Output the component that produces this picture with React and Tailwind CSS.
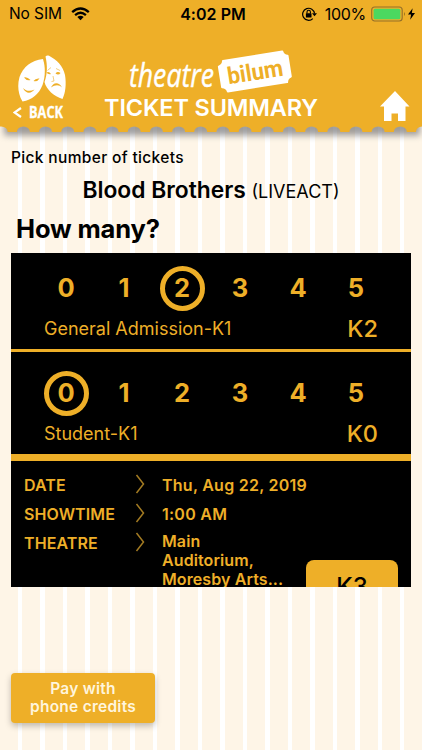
import React, { useState } from "react";
import clsx from "clsx";

const counts = [0, 1, 2, 3, 4, 5];

const notches = Array.from({ length: 20 }, (_, i) => 1.2 + i * 22.17);

// bottom edge of the header, cut like a ticket
function TicketEdge() {
  let d = "M-12 0 V6";
  notches.forEach((x) => {
    d += ` L${(x - 6.5).toFixed(1)} 6 A6.5 5.5 0 0 1 ${(x + 6.5).toFixed(1)} 6`;
  });
  d += " L440 6 V0 Z";

  return (
    <svg width="422" height="24" viewBox="0 0 422 24" className="-mb-[18px] block">
      <rect x="4" y="-6" width="416" height="15.500" fill="#66666a" opacity="0.62" className="blur-[3px]" />
      <path d={d} fill="#eeaf28" />
    </svg>
  );
}

function Masks() {
  return (
    <svg width="50" height="48" viewBox="0 0 50 48" className="block">
      <path d="M27.500 1.500C28.500 .5 29.500 0 31 .8C39 5 45 11 47 20C48.500 29 47.500 38 44.500 44C36 41 28.500 35 26.500 27C29.500 19 29.500 10 27.500 1.500Z" fill="#fff" />
      <path d="M25 4C13 5.500 5 12 1.500 22C-.8 30 0 39 4.500 46.500C14 45 21 39 24.500 30C27.500 21 27.500 12 25 4Z" fill="#fff" />
      <g fill="#eeaf28">
        <path d="M6 22.500Q9 21.500 12.500 25Q8.500 26 6 22.500Z" />
        <path d="M15.500 26Q17.500 23 21.500 23.500Q19.500 27 15.500 26Z" />
        <path d="M5 33C8.500 36.500 12.500 36.500 16.500 34.500C13.500 38.500 8 39.500 5 33Z" />
        <path d="M28.500 17.500Q31 16 33 19Q30 19.800 28.500 17.500Z" />
        <path d="M37.500 18.500Q39.500 16 42.500 18Q40.500 20.800 37.500 18.500Z" />
        <path d="M33 32.500C34.500 28 40.500 25.500 44 32.500C41 29.500 37.500 29.500 33 32.500Z" />
      </g>
      <path d="M29.500 15.500L33 12.500M38 13.500L42 15.500M35 21L36 26L33.500 26.500" fill="none" stroke="#eeaf28" strokeWidth="0.6" />
    </svg>
  );
}

function StatusBar() {
  return (
    <div className="grid h-7 grid-cols-[1fr_auto_1fr] items-center pl-[9px] pr-[7px] text-black">
      <div className="flex items-center gap-[9px]">
        <span className="text-[15.500px] tracking-[-0.1px]">No SIM</span>
        <svg width="19" height="14" viewBox="0 0 19 14">
          <path d="M1.200 5.200Q9.500 -2.300 17.800 5.200M4.100 8.100Q9.500 3.500 14.900 8.100" fill="none" stroke="#000" strokeWidth="2.300" />
          <path d="M6.300 10Q9.500 7.500 12.700 10L9.500 13.200Z" />
        </svg>
      </div>
      <span className="text-[16px] font-semibold tracking-[0.05px] translate-x-[1px]">4:02 PM</span>
      <div className="flex items-center justify-end">
        <svg width="15" height="14" viewBox="0 0 15 14" className="mr-[8px]">
          <path d="M10.800 11.600A6 6 0 1 1 12.600 6.500" fill="none" stroke="#000" strokeWidth="1.200" />
          <path d="M10 6.300H15L12.500 9.300Z" />
          <rect x="3.900" y="6.200" width="5.600" height="4.200" rx="0.500" />
          <path d="M5 6.500V5A1.700 1.700 0 0 1 8.400 5V6.500" fill="none" stroke="#000" strokeWidth="1.100" />
        </svg>
        <span className="mr-[5px] text-[16px] tracking-[-0.3px]">100%</span>
        <svg width="35" height="16" viewBox="0 0 35 16" className="mr-[2px]">
          <rect x="0.700" y="1" width="30.500" height="14" rx="3" fill="none" stroke="#947029" strokeWidth="1.100" />
          <rect x="2.600" y="2.800" width="26.700" height="10.400" rx="1.500" fill="#4bd860" />
          <path d="M33 5.800Q34.500 8 33 10.200Z" fill="#775718" />
        </svg>
        <svg width="7" height="12" viewBox="0 0 8 13">
          <path d="M5.300 0L0 7.200H3.500L2.500 13L8 5.300H4.400Z" />
        </svg>
      </div>
    </div>
  );
}

function Logo() {
  return (
    <svg width="168" height="46" viewBox="0 0 168 46" className="block overflow-visible">
      <text x="2" y="39" textLength="85" lengthAdjust="spacingAndGlyphs" fill="#fff" stroke="#fff" strokeWidth="0.4" className="font-['Open_Sans',sans-serif] text-[33px] italic">
        theatre
      </text>
      <g transform="rotate(-9 128 23)">
        <path d="M98 8H158Q158.500 12 162.500 13V34Q158.500 35 158 39H98Q97.500 35 93 34V13Q97.500 12 98 8Z" fill="#fff" stroke="#fff" strokeWidth="2" strokeLinejoin="round" />
        <text x="100" y="32" textLength="56" lengthAdjust="spacingAndGlyphs" fill="#eeaf28" className="font-[Roboto,sans-serif] text-[23.500px] font-bold">
          bilum
        </text>
      </g>
    </svg>
  );
}

function Header() {
  return (
    <header>
      <div className="h-[126px] bg-[#eeaf28]">
        <StatusBar />
        <div className="grid grid-cols-[92px_1fr_92px] text-white">
          <div className="pt-[27px]">
            <div className="pl-[18px]">
              <Masks />
            </div>
            <div className="mt-[2px] flex items-center pl-[13px]">
              <svg width="9" height="11" viewBox="0 0 9 11" className="mr-[7px]">
                <path d="M8 1L1.500 5.500L8 10" fill="none" stroke="#fff" strokeWidth="2.200" />
              </svg>
              <svg width="35" height="14" className="overflow-visible">
                <text x="0" y="12.500" textLength="34" lengthAdjust="spacingAndGlyphs" fill="#fff" stroke="#fff" strokeWidth="0.3" className="font-['Open_Sans',sans-serif] text-[15.500px] font-bold">
                  BACK
                </text>
              </svg>
            </div>
          </div>
          <div className="flex flex-col items-center pt-[20px]">
            <Logo />
            <h1 className="text-[23.500px] font-semibold leading-[28px] tracking-[-0.15px] whitespace-nowrap">TICKET SUMMARY</h1>
          </div>
          <div className="flex justify-end pr-[12px] pt-[63px]">
            <svg width="30" height="30" viewBox="0 0 30 30">
              <path d="M15 0L29.500 15.500H25.500V30H18V22.500H11.500V30H4V15.500H0Z" fill="#fff" />
            </svg>
          </div>
        </div>
      </div>
      <TicketEdge />
    </header>
  );
}

function TicketRow({ label, value, onChange }) {
  return (
    <div>
      <div className="flex pl-[26px]">
        {counts.map((n) => (
          <button key={n} onClick={() => onChange(n)} className="flex w-[58px] justify-center">
            <span
              className={clsx(
                "flex size-[45px] items-center justify-center rounded-full text-[25.500px] font-bold",
                n === value && "border-[5px] border-[#eeaf28]"
              )}
            >
              {n}
            </span>
          </button>
        ))}
      </div>
      <div className="flex h-[35px] items-center justify-between pl-[33px] pr-[33px]">
        <span className="text-[18px]">{label}</span>
        <span className="text-[23.500px] font-medium">K{value}</span>
      </div>
    </div>
  );
}

function Detail({ label, children }) {
  return (
    <div className="flex h-[29px] items-start whitespace-nowrap">
      <span className="w-[111px] shrink-0 pt-[2px] text-[16px] font-semibold leading-[18px] tracking-[0.1px]">{label}</span>
      <svg width="10" height="20" viewBox="0 0 10 20" className="mr-[17px] shrink-0">
        <path d="M1.500 1L8.500 10L1.500 19" fill="none" stroke="#a37b22" strokeWidth="1.500" />
      </svg>
      {children}
    </div>
  );
}

export default function App() {
  const [general, setGeneral] = useState(2);
  const [student, setStudent] = useState(0);

  const detailText = "pt-[2px] text-[16px] font-semibold leading-[18px] tracking-[0.25px]";

  return (
    <div className="flex h-[750px] w-[422px] flex-col overflow-hidden bg-[#fef5e7] bg-[repeating-linear-gradient(90deg,transparent_0_18px,#fff_18px_22.470px)] font-[Inter,sans-serif] text-black">
      <Header />

      <main className="flex flex-1 flex-col px-[11px] pt-[16px]">
        <p className="text-[15.500px] font-medium leading-[20px] tracking-[0.350px]">Pick number of tickets</p>
        <h2 className="mt-[6px] text-center text-[22.800px] font-semibold leading-[32px]">
          Blood Brothers <span className="text-[18px] font-normal">(LIVEACT)</span>
        </h2>
        <h3 className="mt-[5px] pl-[5px] text-[25.500px] font-bold leading-[32px] tracking-[-0.150px]">How many?</h3>

        <section className="mt-[8px] h-[334px] shrink-0 overflow-hidden bg-black text-[#eeaf28]">
          <div className="h-[99px] border-b-[3px] border-[#eeaf28] pt-[13px]">
            <TicketRow label="General Admission-K1" value={general} onChange={setGeneral} />
          </div>
          <div className="h-[109px] border-b-[7px] border-[#eeaf28] pt-[19px]">
            <TicketRow label="Student-K1" value={student} onChange={setStudent} />
          </div>
          <div className="flex pl-[13px] pt-[13px]">
            <div className="w-[282px] shrink-0">
              <Detail label="DATE">
                <div className={detailText}>Thu, Aug 22, 2019</div>
              </Detail>
              <Detail label="SHOWTIME">
                <div className={detailText}>1:00 AM</div>
              </Detail>
              <Detail label="THEATRE">
                <div className="text-[16px] font-semibold leading-[18.800px] tracking-[0.1px]">
                  Main
                  <br />
                  Auditorium,
                  <br />
                  Moresby Arts...
                </div>
              </Detail>
            </div>
            <button className="mt-[86px] h-[55px] w-[92px] shrink-0 rounded-lg bg-[#eeaf28] pb-px text-[24px] font-medium text-black">
              K{general + student + 1}
            </button>
          </div>
        </section>

        <button className="mt-[86px] h-[50px] w-[144px] shrink-0 rounded-[4px] bg-[#eeaf28] text-[15.500px] font-semibold leading-[18.500px] tracking-[0.250px] text-[#fff5dd] shadow-[0_3px_6px_rgba(0,0,0,0.25)]">
          Pay with
          <br />
          phone credits
        </button>
      </main>
    </div>
  );
}
